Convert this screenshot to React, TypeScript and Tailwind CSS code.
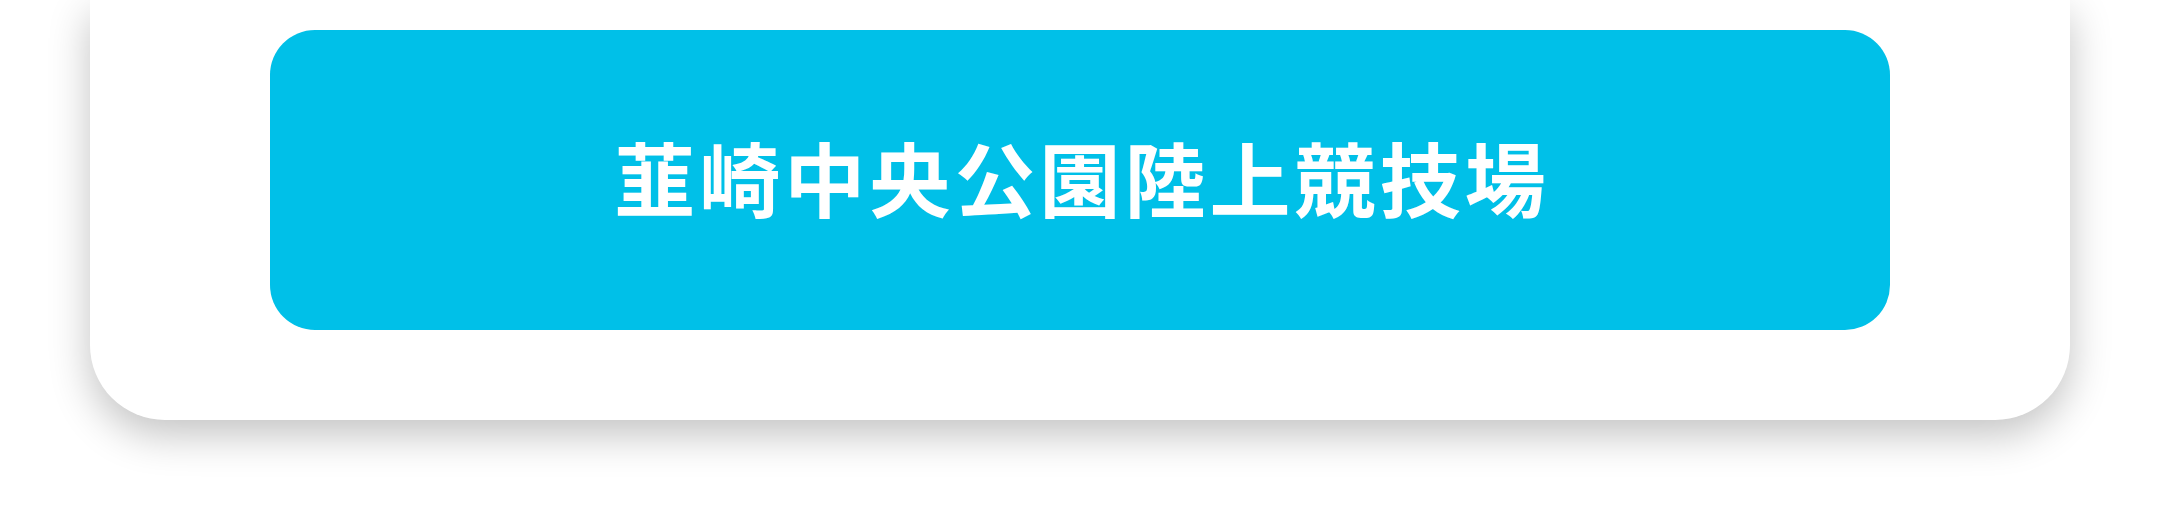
const venues = [
  { id: "nirasaki", name: "韮崎中央公園陸上競技場", href: "#nirasaki" },
];

const App = () => {
  return (
    <main className="bg-white px-[90px] pb-[90px] font-['Noto_Sans_CJK_JP',sans-serif]">
      {/* 会場カード */}
      <section className="flex flex-col gap-[30px] rounded-b-[75px] bg-white px-[180px] pt-[30px] pb-[90px] shadow-[0_15px_42px_rgba(0,0,0,0.24)]">
        {venues.map((venue) => (
          <a
            key={venue.id}
            href={venue.href}
            className="block rounded-[45px] bg-[#00c0e8] pt-[86px] pb-[94px] pl-1 text-center text-[81px] leading-[120px] font-bold tracking-wider text-white"
          >
            {venue.name}
          </a>
        ))}
      </section>
    </main>
  );
};

export default App;
